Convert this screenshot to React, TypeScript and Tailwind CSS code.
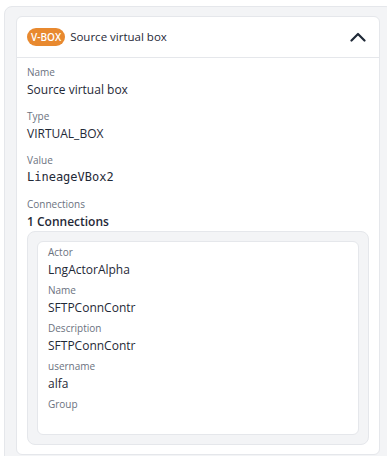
import type { JSX } from 'react';

const FONT = { fontFamily: '"Open Sans", "Noto Sans", sans-serif' };

function Field({ label, value, mono, weight }: { label: string; value?: string; mono?: boolean; weight?: string }): JSX.Element {
  return (
    <div className="flex flex-col">
      <div className="text-[10px] leading-[15px] text-[#6b7280]">{label}</div>
      {value !== undefined && (
        <div
          className={`text-[12px] leading-[19px] text-[#1f2937] ${weight ?? ''} ${mono ? 'text-[11px]' : ''}`}
          style={mono ? { fontFamily: '"DejaVu Sans Mono", monospace' } : undefined}
        >
          {value}
        </div>
      )}
    </div>
  );
}

export default function App(): JSX.Element {
  return (
    <div className="w-[387px] h-[456px] overflow-hidden bg-white" style={FONT}>
      <div className="ml-[4px] mt-[6px] w-[390px] h-[470px] rounded-[8px] border border-[#e5e7eb] bg-[#f3f4f6] pl-[11px] pt-[9px]">
        <div className="w-[364px] rounded-[6px] border border-[#e5e7eb] bg-white">
          {/* header */}
          <div className="flex h-[41px] items-center justify-between border-b border-[#e5e7eb] pl-[10px] pr-[13px]">
            <div className="flex items-center gap-[5px]">
              <span className="rounded-full bg-[#e8892f] px-[4px] text-[10px] font-semibold leading-[18px] text-white">V-BOX</span>
              <span className="text-[11.5px] font-medium text-[#1f2937]">Source virtual box</span>
            </div>
            <svg width="16" height="10" viewBox="0 0 16 10" fill="none" stroke="#1f2937" strokeWidth="2.2" strokeLinecap="round" strokeLinejoin="round">
              <path d="M1.5 8.5 8 2l6.5 6.5" />
            </svg>
          </div>
          {/* body */}
          <div className="flex flex-col gap-[10px] px-[10px] pt-[7px] pb-[9px]">
            <Field label="Name" value="Source virtual box" />
            <Field label="Type" value="VIRTUAL_BOX" />
            <Field label="Value" value="LineageVBox2" mono />
            <div className="flex flex-col">
              <Field label="Connections" value="1 Connections" weight="font-semibold" />
              <div className="rounded-[8px] border border-[#e5e7eb] bg-[#f3f4f6] p-[9px]">
                <div className="flex flex-col gap-[4px] rounded-[6px] border border-[#e5e7eb] bg-white px-[10px] pt-[3px] pb-[22px]">
                  <Field label="Actor" value="LngActorAlpha" weight="font-medium" />
                  <Field label="Name" value="SFTPConnContr" />
                  <Field label="Description" value="SFTPConnContr" />
                  <Field label="username" value="alfa" />
                  <Field label="Group" />
                </div>
              </div>
            </div>
          </div>
        </div>
      </div>
    </div>
  );
}
